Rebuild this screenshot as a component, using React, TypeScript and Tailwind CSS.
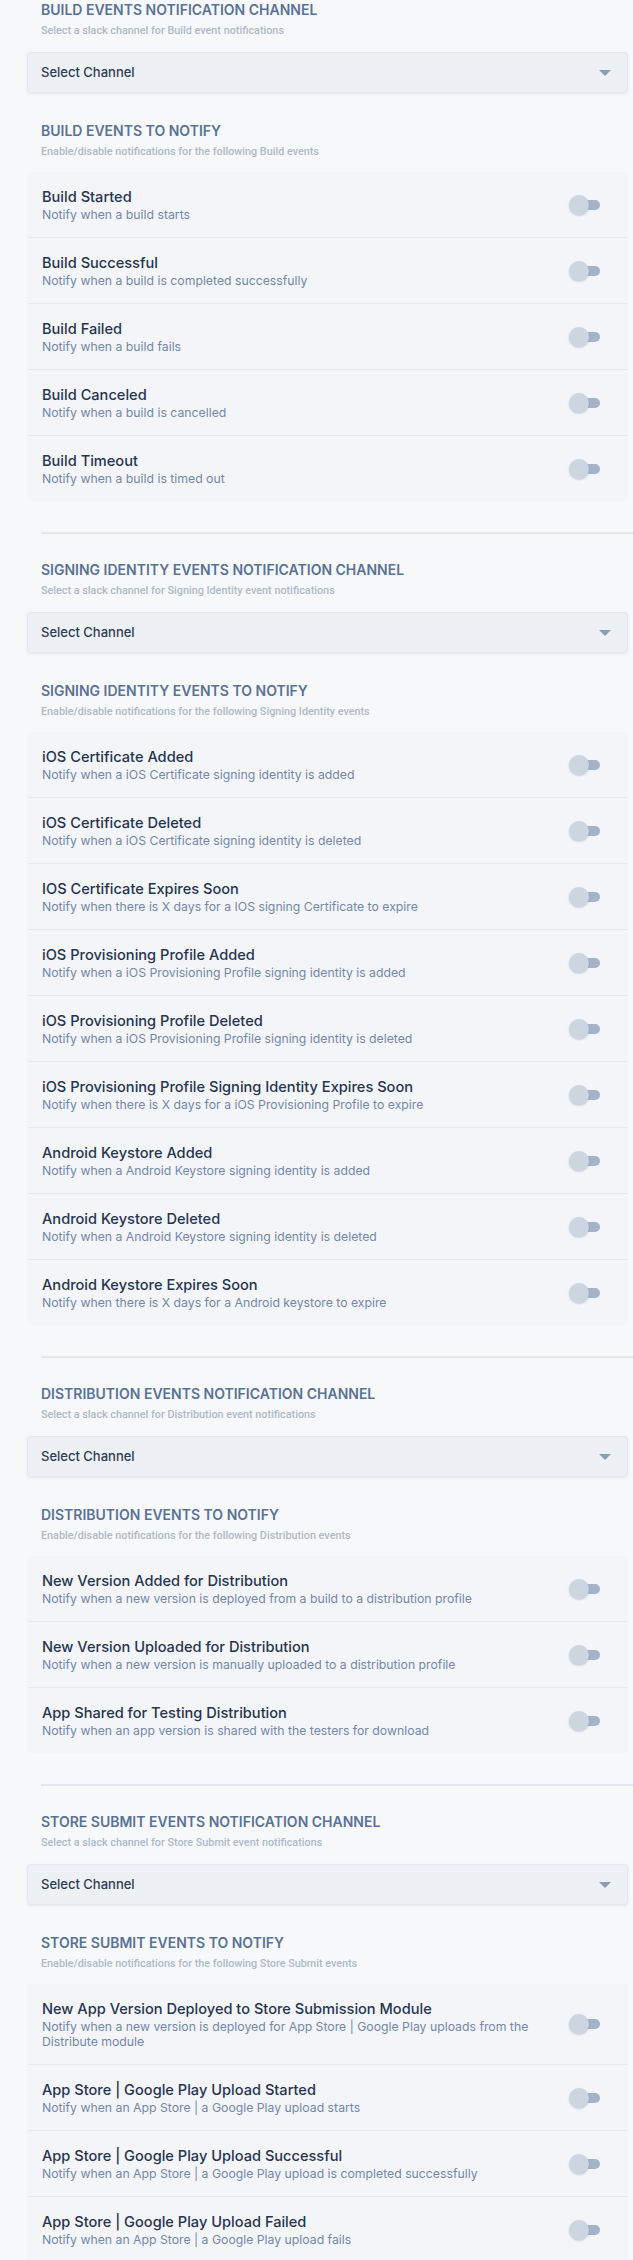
import { useState } from 'react'

type EventItem = { title: string; desc: string }
type Section = { name: string; label: string; events: EventItem[] }

const SECTIONS: Section[] = [
  {
    name: 'BUILD',
    label: 'Build',
    events: [
      { title: 'Build Started', desc: 'Notify when a build starts' },
      { title: 'Build Successful', desc: 'Notify when a build is completed successfully' },
      { title: 'Build Failed', desc: 'Notify when a build fails' },
      { title: 'Build Canceled', desc: 'Notify when a build is cancelled' },
      { title: 'Build Timeout', desc: 'Notify when a build is timed out' },
    ],
  },
  {
    name: 'SIGNING IDENTITY',
    label: 'Signing Identity',
    events: [
      { title: 'iOS Certificate Added', desc: 'Notify when a iOS Certificate signing identity is added' },
      { title: 'iOS Certificate Deleted', desc: 'Notify when a iOS Certificate signing identity is deleted' },
      { title: 'IOS Certificate Expires Soon', desc: 'Notify when there is X days for a IOS signing Certificate to expire' },
      { title: 'iOS Provisioning Profile Added', desc: 'Notify when a iOS Provisioning Profile signing identity is added' },
      { title: 'iOS Provisioning Profile Deleted', desc: 'Notify when a iOS Provisioning Profile signing identity is deleted' },
      { title: 'iOS Provisioning Profile Signing Identity Expires Soon', desc: 'Notify when there is X days for a iOS Provisioning Profile to expire' },
      { title: 'Android Keystore Added', desc: 'Notify when a Android Keystore signing identity is added' },
      { title: 'Android Keystore Deleted', desc: 'Notify when a Android Keystore signing identity is deleted' },
      { title: 'Android Keystore Expires Soon', desc: 'Notify when there is X days for a Android keystore to expire' },
    ],
  },
  {
    name: 'DISTRIBUTION',
    label: 'Distribution',
    events: [
      { title: 'New Version Added for Distribution', desc: 'Notify when a new version is deployed from a build to a distribution profile' },
      { title: 'New Version Uploaded for Distribution', desc: 'Notify when a new version is manually uploaded to a distribution profile' },
      { title: 'App Shared for Testing Distribution', desc: 'Notify when an app version is shared with the testers for download' },
    ],
  },
  {
    name: 'STORE SUBMIT',
    label: 'Store Submit',
    events: [
      { title: 'New App Version Deployed to Store Submission Module', desc: 'Notify when a new version is deployed for App Store | Google Play uploads from the Distribute module' },
      { title: 'App Store | Google Play Upload Started', desc: 'Notify when an App Store | a Google Play upload starts' },
      { title: 'App Store | Google Play Upload Successful', desc: 'Notify when an App Store | a Google Play upload is completed successfully' },
      { title: 'App Store | Google Play Upload Failed', desc: 'Notify when an App Store | a Google Play upload fails' },
    ],
  },
]

function Toggle({ on, onClick }: { on: boolean; onClick: () => void }) {
  return (
    <button onClick={onClick} className="relative w-[31px] h-5 shrink-0 cursor-pointer">
      <span className="absolute right-0 top-[5px] h-[10px] w-[26px] rounded-full bg-[#a3b3ca]" />
      <span
        className={`absolute top-0 h-5 w-5 rounded-full shadow-[0_1px_2px_rgba(60,80,110,0.25)] ${
          on ? 'left-[11px] bg-[#5a7295]' : 'left-0 bg-[#cdd5e0]'
        }`}
      />
    </button>
  )
}

function Heading({ title, sub }: { title: string; sub: string }) {
  return (
    <div className="pl-[14px]">
      <h2 className="font-['Inter',sans-serif] text-[14px] leading-5 font-semibold text-[#5a7295]">{title}</h2>
      <p className="mt-[3px] font-['Roboto',sans-serif] text-[10.8px] leading-4 font-medium text-[#aebacb]">{sub}</p>
    </div>
  )
}

function SectionBlock({ s }: { s: Section }) {
  const [state, setState] = useState<boolean[]>(s.events.map(() => false))

  return (
    <div>
      <Heading
        title={`${s.name} EVENTS NOTIFICATION CHANNEL`}
        sub={`Select a slack channel for ${s.label} event notifications`}
      />

      {/* channel select */}
      <div className="mt-[13px] h-[41px] flex items-center justify-between pl-[13px] pr-4 bg-[#edf0f5] border border-[#e3e7ee] rounded shadow-[0_1px_3px_rgba(40,60,90,0.08)]">
        <span className="text-[13px] font-medium text-[#2d3b55]">Select Channel</span>
        <svg width="12" height="6" viewBox="0 0 12 6">
          <path d="M0 0h12L6 6z" fill="#8d9cb5" />
        </svg>
      </div>

      <div className="mt-[28px]">
        <Heading
          title={`${s.name} EVENTS TO NOTIFY`}
          sub={`Enable/disable notifications for the following ${s.label} events`}
        />
      </div>

      <div className="mt-3 bg-[#f3f5f9] rounded">
        {s.events.map((e, i) => (
          <div
            key={e.title}
            className={`flex items-center gap-6 pl-[15px] pr-[28px] pt-[15px] pb-[15px] ${
              i < s.events.length - 1 ? 'border-b border-[#e6e9f0]' : ''
            }`}
          >
            <div className="flex-1 min-w-0">
              <div className="text-[14.6px] leading-5 font-medium text-[#26344f]">{e.title}</div>
              <div className="text-[12.25px] leading-[15px] text-[#7488a9]">{e.desc}</div>
            </div>
            <Toggle
              on={state[i]}
              onClick={() => setState((p) => p.map((v, j) => (j === i ? !v : v)))}
            />
          </div>
        ))}
      </div>
    </div>
  )
}

export default function App() {
  return (
    <div className="min-h-screen bg-[#f7f8fa] pl-[27px] pr-[5px]" style={{ fontFamily: 'Inter, "Noto Sans", sans-serif' }}>
      {SECTIONS.map((s, i) => (
        <div key={s.name}>
          {i > 0 && <div className="mt-[31px] mb-[26px] ml-[14px] mr-[-5px] h-[2px] bg-[#e3e7ee]" />}
          <SectionBlock s={s} />
        </div>
      ))}
    </div>
  )
}
